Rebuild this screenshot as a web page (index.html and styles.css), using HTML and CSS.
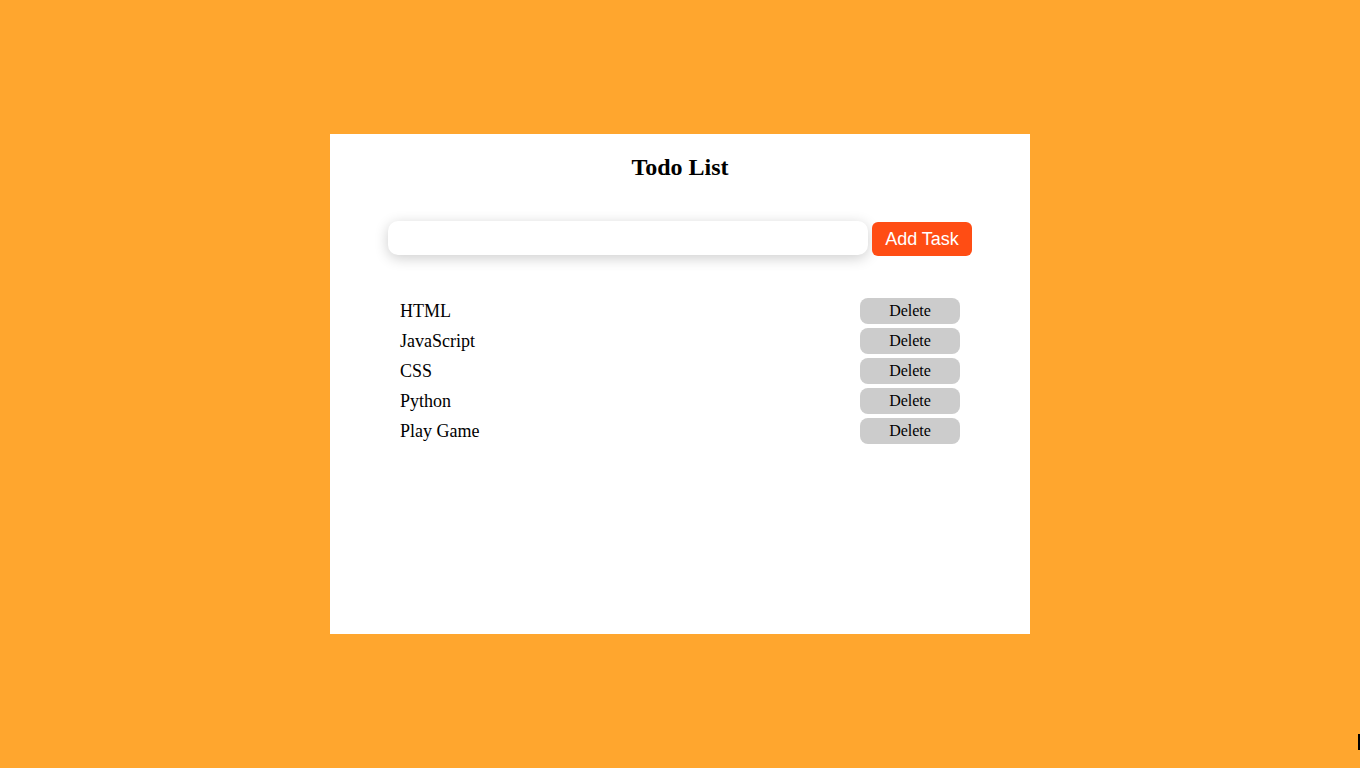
FILE: index.html
```html
<!DOCTYPE html>
<html>
<head>
<meta charset="utf-8">
<link rel="stylesheet" href="styles.css">
</head>
<body>
<div class="card">
  <h2 class="title">Todo List</h2>
  <div class="add-row">
    <input class="task-input" type="text">
    <button class="add-btn">Add Task</button>
  </div>
  <ul class="list">
    <li class="item"><span>HTML</span><button class="del">Delete</button></li>
    <li class="item"><span>JavaScript</span><button class="del">Delete</button></li>
    <li class="item"><span>CSS</span><button class="del">Delete</button></li>
    <li class="item"><span>Python</span><button class="del">Delete</button></li>
    <li class="item"><span>Play Game</span><button class="del">Delete</button></li>
  </ul>
</div>
<div class="mark"></div>
</body>
</html>
```
FILE: styles.css
```css
html, body {
  margin: 0;
  padding: 0;
  height: 100%;
}
body {
  background: #ffa62e;
  font-family: "Liberation Serif", "Times New Roman", serif;
  display: flex;
  align-items: center;
  justify-content: center;
  overflow: hidden;
}
.card {
  width: 700px;
  height: 500px;
  background: #ffffff;
  box-sizing: border-box;
  padding-top: 20px;
}
.title {
  margin: 0;
  font-size: 24px;
  line-height: 27px;
  text-align: center;
  font-weight: bold;
}
.add-row {
  display: flex;
  justify-content: center;
  gap: 4px;
  margin-top: 40px;
}
.task-input {
  width: 480px;
  height: 34px;
  box-sizing: border-box;
  border: none;
  border-radius: 10px;
  box-shadow: 0 3px 14px rgba(0,0,0,0.2);
  outline: none;
  padding: 0 10px;
}
.add-btn {
  width: 100px;
  height: 34px;
  margin-top: 1px;
  border: none;
  border-radius: 6px;
  background: #ff4d14;
  color: #ffffff;
  font-family: "Liberation Sans", Arial, sans-serif;
  font-size: 18px;
  padding: 0;
}
.list {
  list-style: none;
  margin: 42px auto 0;
  padding: 0;
  width: 560px;
  display: flex;
  flex-direction: column;
  gap: 4px;
}
.item {
  display: flex;
  justify-content: space-between;
  align-items: center;
  height: 26px;
  font-size: 18px;
}
.del {
  width: 100px;
  height: 26px;
  border: none;
  border-radius: 8px;
  background: #cccccc;
  font-family: "Liberation Serif", "Times New Roman", serif;
  font-size: 16px;
  color: #000;
  padding: 0;
}
.mark {
  position: fixed;
  right: 0;
  top: 734px;
  width: 2px;
  height: 16px;
  background: #000;
}
```
